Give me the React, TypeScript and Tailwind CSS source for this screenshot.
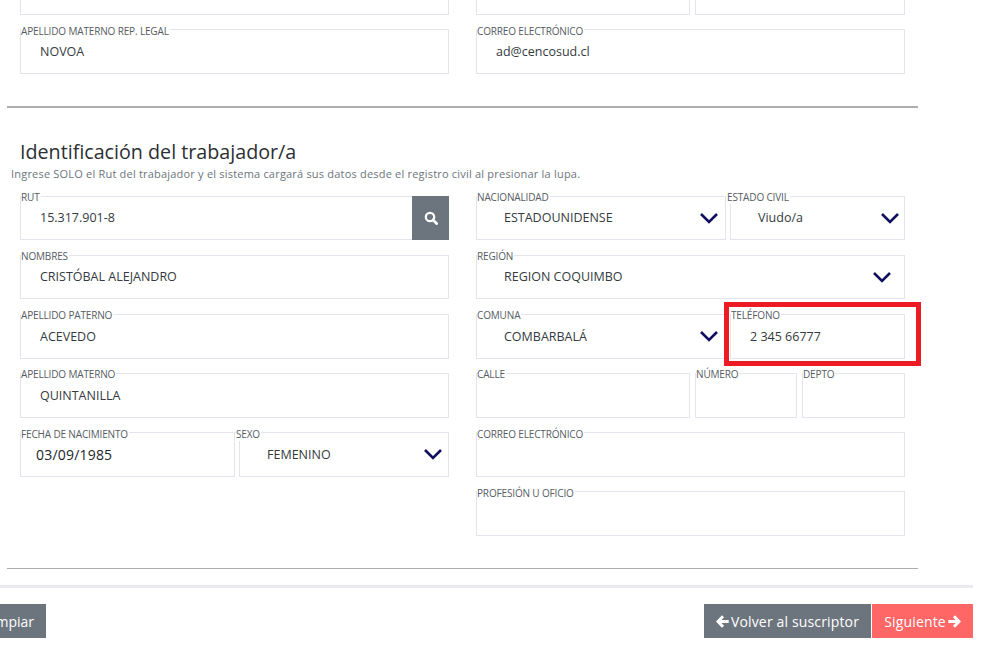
import React from "react";

function Chevron() {
  return (
    <svg width="20" height="12" viewBox="0 0 20 12" fill="none" className="shrink-0">
      <polyline points="2,2 10,10 18,2" stroke="#10105e" strokeWidth="2.6" />
    </svg>
  );
}

function SearchIcon() {
  return (
    <svg width="14" height="14" viewBox="0 0 14 14" fill="none">
      <circle cx="6" cy="6" r="4.2" stroke="white" strokeWidth="2.2" />
      <line x1="9" y1="9" x2="12.6" y2="12.6" stroke="white" strokeWidth="2.8" strokeLinecap="round" />
    </svg>
  );
}

function ArrowLeftIcon() {
  return (
    <svg width="13" height="13" viewBox="0 0 13 13" fill="none" className="shrink-0">
      <path d="M7 1.2 L2 6.5 L7 11.8 M2.5 6.5 H12.7" stroke="white" strokeWidth="3" />
    </svg>
  );
}

function ArrowRightIcon() {
  return (
    <svg width="13" height="13" viewBox="0 0 13 13" fill="none" className="shrink-0">
      <path d="M6 1.2 L11 6.5 L6 11.8 M10.5 6.5 H0.3" stroke="white" strokeWidth="3" />
    </svg>
  );
}

type FieldProps = {
  label: string;
  value?: string;
  className?: string;
  labelClass?: string;
  valueClass?: string;
  select?: boolean;
  chevronClass?: string;
  short?: boolean;
  up?: boolean;
  children?: React.ReactNode;
};

function Field({ label, value, className = "", labelClass = "left-0", valueClass = "pl-[19px] text-[12.5px] text-[#343a40]", select, chevronClass = "pr-[5px]", short, up, children }: FieldProps) {
  return (
    <div className={`relative border border-[#e4e4ef] flex items-center ${short ? "h-[44px] mb-px" : "h-[45px]"} ${className}`}>
      <span className={`absolute bg-white text-[10px] leading-[14px] tracking-[-0.15px] text-[#555c63] whitespace-nowrap pr-px ${up ? "-top-[7px]" : "-top-[6px]"} ${labelClass}`}>{label}</span>
      <span className={`flex-1 leading-[18px] ${short ? "mt-0" : "mt-px"} ${valueClass}`}>{value}</span>
      {select && <span className={`flex items-center ${short ? "-mt-px" : "-mt-[2px]"} ${chevronClass}`}><Chevron /></span>}
      {children}
    </div>
  );
}

const selectValue = "pl-[27px] text-[12.5px] text-[#343a40]";

export default function App() {
  return (
    <div className="w-[1005px] h-[649px] overflow-hidden bg-white font-['Open_Sans',sans-serif]">
      <div className="w-[973px]">
        <div className="ml-5 w-[885px] grid grid-cols-[429px_429px] gap-x-[27px]">
          <div className="h-[15px] border-x border-b border-[#e4e4ef]" />
          <div className="h-[15px] flex gap-[5px]">
            <div className="w-[214px] border-x border-b border-[#e4e4ef]" />
            <div className="flex-1 border-x border-b border-[#e4e4ef]" />
          </div>
        </div>
        <div className="ml-5 mt-[14px] w-[885px] grid grid-cols-[429px_429px] gap-x-[27px]">
          <Field label="APELLIDO MATERNO REP. LEGAL" value="NOVOA" />
          <Field label="CORREO ELECTRÓNICO" value="ad@cencosud.cl" />
        </div>

        <div className="ml-[7px] mt-[32px] w-[911px] h-[2px] bg-[#adadad]" />

        <h2 className="ml-5 mt-[31px] text-[19.7px] leading-[26px] font-normal text-[#2b2f33]">Identificación del trabajador/a</h2>
        <p className="ml-[11px] mt-px text-[11px] leading-[15px] tracking-[0.2px] text-[#6c757d]">
          Ingrese SOLO el Rut del trabajador y el sistema cargará sus datos desde el registro civil al presionar la lupa.
        </p>

        <div className="ml-5 mt-[15px] w-[885px] grid grid-cols-[429px_429px] gap-x-[27px]">
          <div className="flex flex-col gap-[14px]">
            <Field short up label="RUT" value="15.317.901-8">
              <span className="w-[37px] self-stretch -my-px -mr-px bg-[#6c757d] flex items-center justify-center">
                <SearchIcon />
              </span>
            </Field>
            <Field short up label="NOMBRES" value="CRISTÓBAL ALEJANDRO" />
            <Field up label="APELLIDO PATERNO" value="ACEVEDO" />
            <Field up label="APELLIDO MATERNO" value="QUINTANILLA" />
            <div className="flex gap-1">
              <Field className="w-[215px]" label="FECHA DE NACIMIENTO" value="03/09/1985" valueClass="pl-[15px] text-[14px] tracking-[0.2px] text-[#212529]" />
              <Field className="flex-1" label="SEXO" labelClass="-left-[4px]" value="FEMENINO" valueClass={selectValue} select chevronClass="pr-[5px]" />
            </div>
          </div>
          <div className="flex flex-col gap-[14px]">
            <div className="flex gap-1">
              <Field short up className="w-[250px]" label="NACIONALIDAD" value="ESTADOUNIDENSE" valueClass={selectValue} select chevronClass="pr-[6px]" />
              <Field short up className="flex-1" label="ESTADO CIVIL" labelClass="-left-[4px]" value="Viudo/a" valueClass={selectValue} select chevronClass="pr-[4px]" />
            </div>
            <Field short up label="REGIÓN" value="REGION COQUIMBO" valueClass={selectValue} select chevronClass="pr-[12px]" />
            <div className="flex gap-1">
              <Field up className="w-[250px]" label="COMUNA" value="COMBARBALÁ" valueClass={selectValue} select chevronClass="pr-[6px]" />
              <Field up className="flex-1" label="TELÉFONO" value="2 345 66777">
                <span className="absolute -left-[7px] -right-[17px] -top-[13px] -bottom-[8px] border-[5px] border-[#ed1c24]" />
              </Field>
            </div>
            <div className="flex gap-[5px]">
              <Field up className="w-[214px]" label="CALLE" />
              <Field up className="w-[102px]" label="NÚMERO" />
              <Field up className="flex-1" label="DEPTO" />
            </div>
            <Field label="CORREO ELECTRÓNICO" />
            <Field label="PROFESIÓN U OFICIO" />
          </div>
        </div>

        <div className="ml-[7px] mt-[32px] w-[911px] h-px bg-[#adadad]" />
        <div className="mt-4 h-[3px] bg-[#e9e9f1]" />

        <div className="mt-4 flex justify-between items-start">
          <button className="w-[46px] h-[34px] bg-[#6c757d] text-white text-[14px] overflow-hidden flex items-center justify-end pr-3 whitespace-nowrap">Limpiar</button>
          <div className="flex gap-px">
            <button className="h-[34px] w-[167px] bg-[#6c757d] text-white text-[14px] tracking-[0.15px] flex items-center justify-center gap-[2px] whitespace-nowrap">
              <ArrowLeftIcon />Volver al suscriptor
            </button>
            <button className="h-[34px] w-[101px] bg-[#ff6666] text-white text-[14px] tracking-[0.15px] flex items-center justify-center gap-[2px] whitespace-nowrap">
              Siguiente<ArrowRightIcon />
            </button>
          </div>
        </div>
      </div>
    </div>
  );
}
